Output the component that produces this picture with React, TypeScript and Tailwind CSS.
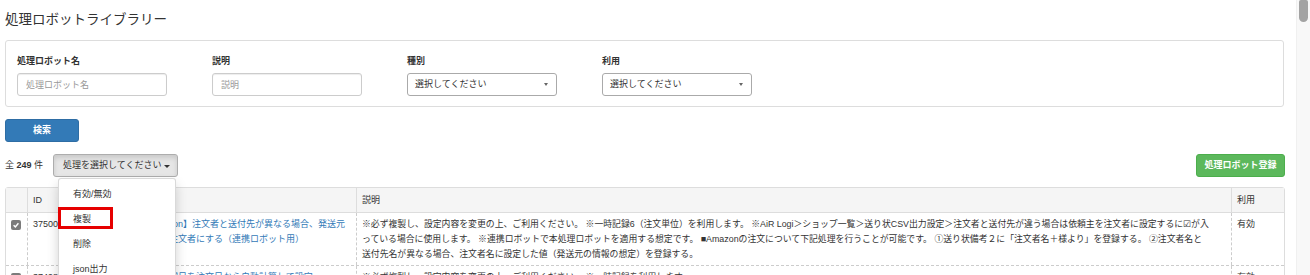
const cols = 'grid grid-cols-[21px_73px_256px_875px_53px]'

const filters = [
  { label: '処理ロボット名', kind: 'input' },
  { label: '説明', kind: 'input' },
  { label: '種別', kind: 'select' },
  { label: '利用', kind: 'select' },
]

const menuItems = ['有効/無効', '複製', '削除', 'json出力']

const rows = [
  {
    id: '37500',
    checked: true,
    name: ['【AiR連携 Amazon】注文者と送付先が異なる場合、発送元', '（発送元名）を注文者にする（連携ロボット用）'],
    desc: [
      '※必ず複製し、設定内容を変更の上、ご利用ください。 ※一時記録6（注文単位）を利用します。 ※AiR Logi＞ショップ一覧＞送り状CSV出力設定＞注文者と送付先が違う場合は依頼主を注文者に設定するに☑が入',
      'っている場合に使用します。 ※連携ロボットで本処理ロボットを適用する想定です。 ■Amazonの注文について下記処理を行うことが可能です。 ①送り状備考２に「注文者名＋様より」を登録する。 ②注文者名と',
      '送付先名が異なる場合、注文者名に設定した値（発送元の情報の想定）を登録する。',
    ],
    use: '有効',
  },
  {
    id: '37498',
    checked: false,
    name: ['【楽天】配送希望日を注文日から自動計算して設定'],
    desc: ['※必ず複製し、設定内容を変更の上、ご利用ください。 ※一時記録を利用します。'],
    use: '有効',
  },
]

function Checkbox({ checked }: { checked: boolean }) {
  return (
    <div className="mt-[3px] ml-[5px] flex h-[10px] w-[10px] items-center justify-center rounded-[2px] bg-[#7b7b7b]">
      {checked && (
        <svg viewBox="0 0 10 10" className="h-[8px] w-[8px]">
          <path d="M2 5.2 L4.2 7.3 L8 2.8" fill="none" stroke="white" strokeWidth="1.8" />
        </svg>
      )}
    </div>
  )
}

export default function App() {
  return (
    <div className="flex h-[275px] w-[1310px] overflow-hidden bg-white font-['Liberation_Sans','Noto_Sans_CJK_JP',sans-serif] text-[9px] leading-[15px] text-[#333]">
      <main className="flex-1 pt-[10px] pl-[5px] pr-[11px]">
        <h1 className="text-[13.5px] leading-[20px] font-normal">処理ロボットライブラリー</h1>

        {/* 検索条件 */}
        <div className="mt-[10px] mr-[1px] flex rounded-[3px] border border-[#ddd] pt-[13px] pb-[10px] pl-[11px]">
          {filters.map((f) => (
            <div key={f.label} className="w-[195px]">
              <div className="mb-[4px] font-bold">{f.label}</div>
              {f.kind === 'input' ? (
                <input
                  placeholder={f.label}
                  className="h-[23px] w-[150px] rounded-[3px] border border-[#ccc] px-[8px] text-[9px] shadow-[inset_0_1px_1px_rgba(0,0,0,0.075)] outline-none placeholder:text-[#999]"
                />
              ) : (
                <div className="flex h-[23px] w-[150px] items-center justify-between rounded-[3px] border border-[#aaa] bg-white pl-[7px] pr-[8px]">
                  <span>選択してください</span>
                  <span className="h-0 w-0 border-x-[2px] border-t-[3px] border-x-transparent border-t-[#666]" />
                </div>
              )}
            </div>
          ))}
        </div>

        <button className="mt-[12px] flex h-[23px] w-[74px] items-center justify-center rounded-[3px] border border-[#2e6da4] bg-[#337ab7] font-bold text-white">
          検索
        </button>

        {/* ツールバー */}
        <div className="mt-[12px] flex h-[23px] items-center justify-between">
          <div className="flex items-center">
            <span>
              全 <b>249</b> 件
            </span>
            <div className="relative ml-[10px]">
              <button className="flex h-[23px] items-center gap-[2px] rounded-[3px] border border-[#adadad] bg-[#e6e6e6] pl-[9px] pr-[7px] shadow-[inset_0_3px_5px_rgba(0,0,0,0.125)]">
                処理を選択してください
                <span className="mt-[1px] h-0 w-0 border-x-[3px] border-t-[3px] border-x-transparent border-t-[#333]" />
              </button>
              <div className="absolute top-[calc(100%+1px)] left-[5px] z-10 w-[118px] rounded-[3px] border border-[rgba(0,0,0,0.15)] bg-white pt-[3px] shadow-[0_6px_12px_rgba(0,0,0,0.175)]">
                {menuItems.map((m) => (
                  <div key={m} className="h-[25px] pl-[14px] leading-[25px]">
                    {m}
                  </div>
                ))}
                <div className="absolute top-[28px] -left-[1px] h-[22px] w-[55px] border-[3px] border-[#e60000]" />
              </div>
            </div>
          </div>
          <button className="h-[23px] w-[89px] rounded-[3px] border border-[#4cae4c] bg-[#5cb85c] font-bold text-white">
            処理ロボット登録
          </button>
        </div>

        {/* 一覧 */}
        <div className="mt-[10px] rounded-t-[3px] border border-[#ddd]">
          <div className={`${cols} h-[25px] border-b border-[#ddd] bg-[#f5f5f5]`}>
            <div />
            <div className="flex items-center border-l border-[#ddd] px-[5px]">ID</div>
            <div className="flex items-center border-l border-[#ddd] px-[5px]">処理ロボット名</div>
            <div className="flex items-center border-l border-[#ddd] px-[5px]">説明</div>
            <div className="flex items-center border-l border-[#ddd] px-[5px]">利用</div>
          </div>
          {rows.map((r) => (
            <div key={r.id} className={`${cols} border-b border-dashed border-[#ccc]`}>
              <div className="pt-[4px] pb-[3px]">
                <Checkbox checked={r.checked} />
              </div>
              <div className="border-l border-dashed border-[#ccc] px-[5px] pt-[4px] pb-[3px]">{r.id}</div>
              <div className="overflow-hidden border-l border-dashed border-[#ccc] px-[5px] pt-[4px] pb-[3px] whitespace-nowrap text-[#337ab7]">
                {r.name.map((l) => (
                  <div key={l}>{l}</div>
                ))}
              </div>
              <div className="overflow-hidden border-l border-dashed border-[#ccc] px-[5px] pt-[4px] pb-[3px] text-[8.85px] whitespace-nowrap">
                {r.desc.map((l) => (
                  <div key={l}>{l}</div>
                ))}
              </div>
              <div className="border-l border-dashed border-[#ccc] px-[5px] pt-[4px] pb-[3px]">{r.use}</div>
            </div>
          ))}
        </div>
      </main>

      {/* スクロールバー */}
      <div className="w-[14px] border-l border-[#f0f0f0] bg-[#f8f8f8] pl-[2px]">
        <div className="h-[22px] w-[9px] rounded-t-[2px] rounded-b-[5px] bg-[#a3a3a3]" />
      </div>
    </div>
  )
}
